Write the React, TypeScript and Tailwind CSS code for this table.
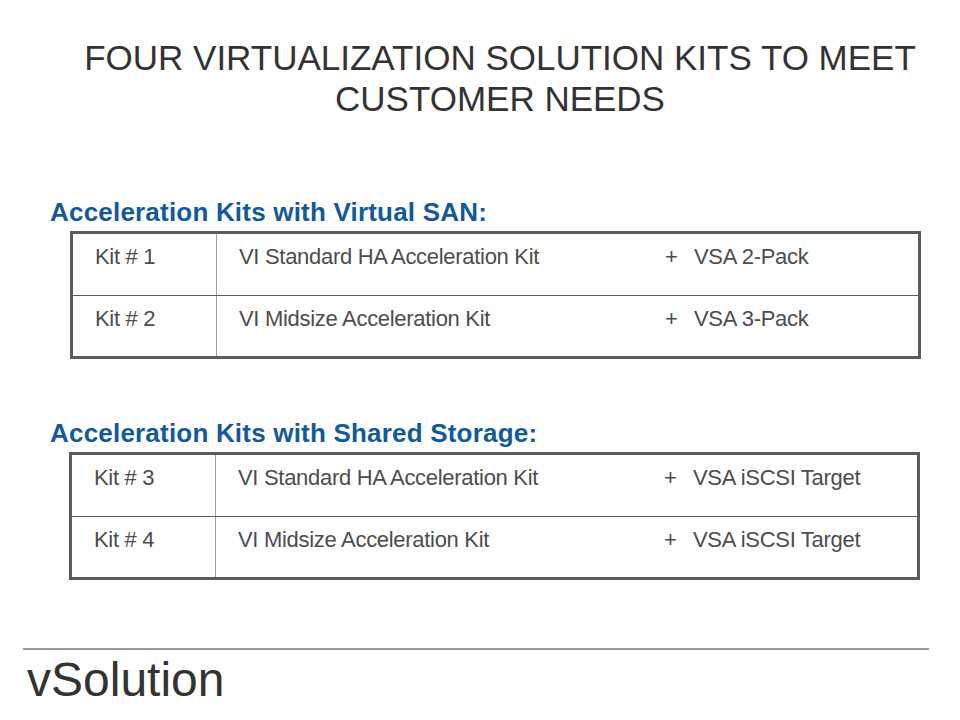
const sans = "font-['Liberation_Sans',Arial,sans-serif]";

interface KitRow {
  kit: string;
  base: string;
  addon: string;
}

const sanKits: KitRow[] = [
  { kit: 'Kit # 1', base: 'VI Standard HA Acceleration Kit', addon: 'VSA 2-Pack' },
  { kit: 'Kit # 2', base: 'VI Midsize Acceleration Kit', addon: 'VSA 3-Pack' },
];

const sharedKits: KitRow[] = [
  { kit: 'Kit # 3', base: 'VI Standard HA Acceleration Kit', addon: 'VSA iSCSI Target' },
  { kit: 'Kit # 4', base: 'VI Midsize Acceleration Kit', addon: 'VSA iSCSI Target' },
];

function KitTable({ rows }: { rows: KitRow[] }) {
  return (
    <div className="w-[851px] border-[3px] border-[#5c5c5c] bg-white">
      {rows.map((row, i) => (
        <div
          key={row.kit}
          className={`flex h-[61px] text-[22px] leading-[26px] tracking-[-0.3px] text-[#4d4d4d] ${sans} ${
            i > 0 ? 'border-t border-[#5c5c5c]' : ''
          }`}
        >
          <div className="w-[144px] shrink-0 border-r border-[#a0a0a0] pl-[22px] pt-[10px]">{row.kit}</div>
          <div className="w-[448px] shrink-0 pl-[22px] pt-[10px]">{row.base}</div>
          <div className="w-[29px] shrink-0 pt-[10px]">+</div>
          <div className="pt-[10px]">{row.addon}</div>
        </div>
      ))}
    </div>
  );
}

export default function App() {
  return (
    <div className="relative flex h-[720px] w-[960px] flex-col overflow-hidden bg-white">
      {/* Title */}
      <div className={`ml-[40px] w-[920px] pt-[37px] text-center text-[35px] leading-[41px] text-[#333333] ${sans}`}>
        <p>FOUR VIRTUALIZATION SOLUTION KITS TO MEET</p>
        <p>CUSTOMER NEEDS</p>
      </div>

      {/* Virtual SAN */}
      <h2 className={`ml-[50px] mt-[78px] text-[26px] font-bold leading-[30px] tracking-[0.2px] text-[#125a99] ${sans}`}>
        Acceleration Kits with Virtual SAN:
      </h2>
      <div className="ml-[70px] mt-[4px]">
        <KitTable rows={sanKits} />
      </div>

      {/* Shared storage */}
      <h2 className={`ml-[50px] mt-[59px] text-[26px] font-bold leading-[30px] tracking-[0.2px] text-[#125a99] ${sans}`}>
        Acceleration Kits with Shared Storage:
      </h2>
      <div className="ml-[69px] mt-[4px]">
        <KitTable rows={sharedKits} />
      </div>

      {/* Footer */}
      <div className="mt-auto">
        <div className="ml-[23px] h-[2px] w-[906px] bg-[#9a9a9a]" />
        <div className={`ml-[27px] pb-[12px] pt-[2px] text-[48px] leading-[56px] text-[#333333] ${sans}`}>
          vSolution
        </div>
      </div>
    </div>
  );
}
